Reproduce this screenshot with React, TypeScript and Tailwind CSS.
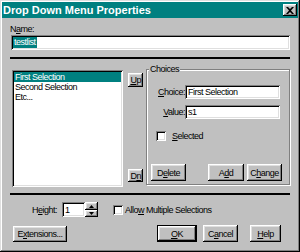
import type { ReactNode } from 'react';

const raised =
  'bg-[#c0c0c0] shadow-[inset_-1px_-1px_#000,inset_1px_1px_#fff,inset_-2px_-2px_#808080,inset_2px_2px_#dfdfdf]';
const sunken =
  'bg-white shadow-[inset_1px_1px_#808080,inset_-1px_-1px_#fff,inset_2px_2px_#000,inset_-2px_-2px_#dfdfdf]';

function Btn({ className = '', children }: { className?: string; children: ReactNode }) {
  return (
    <div className={`flex items-center justify-center ${raised} ${className}`}>
      <span>{children}</span>
    </div>
  );
}

function Check({ className = '' }: { className?: string }) {
  return <div className={`w-[10px] h-[10px] ${sunken} ${className}`} />;
}

function Arrow({ up }: { up?: boolean }) {
  return (
    <svg width="5" height="3" viewBox="0 0 5 3">
      <path d={up ? 'M2.5 0 L5 3 L0 3 Z' : 'M0 0 L5 0 L2.5 3 Z'} fill="#000" />
    </svg>
  );
}

export default function App() {
  return (
    <div
      className="w-[300px] h-[252px] bg-[#c0c0c0] p-[2px] flex flex-col text-black text-[9px] leading-[10px] tracking-[-0.5px] shadow-[inset_-1px_-1px_#000,inset_1px_1px_#dfdfdf,inset_-2px_-2px_#808080,inset_2px_2px_#fff]"
      style={{ fontFamily: '"Liberation Sans", Arial, sans-serif' }}
    >
      {/* Title bar */}
      <div className="h-[16px] bg-[#008080] flex items-center pl-[1px] pr-[1px]">
        <span className="flex-1 text-white font-bold text-[11px] leading-[16px] tracking-normal">
          Drop Down Menu Properties
        </span>
        <div className={`w-[14px] h-[12px] flex items-center justify-center ${raised}`}>
          <svg width="8" height="7" viewBox="0 0 8 7">
            <path d="M0 0h2l2 2 2-2h2L5 3.5 8 7H6L4 5 2 7H0l3-3.5z" fill="#000" />
          </svg>
        </div>
      </div>

      <div className="flex flex-col px-[8px]">
        {/* Name */}
        <div className="mt-[6px] h-[10px]">
          N<u>a</u>me:
        </div>
        <div className={`mt-[1px] ml-[1px] w-[279px] h-[15px] ${sunken} flex items-center pl-[2px]`}>
          <span className="bg-[#008080] text-white px-[1px] leading-[11px]">testlist</span>
        </div>

        <div className="mt-[7px] h-[2px] bg-black w-[280px]" />

        {/* Main row */}
        <div className="mt-[11px] flex h-[117px]">
          <div className={`ml-[2px] w-[112px] h-[117px] ${sunken} p-[2px]`}>
            <div className="bg-[#008080] text-white h-[10px] pl-[1px]">First Selection</div>
            <div className="h-[10px] pl-[1px]">Second Selection</div>
            <div className="h-[10px] pl-[1px]">Etc...</div>
          </div>

          <div className="ml-[5px] w-[15px] flex flex-col justify-between pt-[3px] pb-[5px]">
            <Btn className="h-[14px]">
              <u>U</u>p
            </Btn>
            <Btn className="h-[13px]">
              D<u>n</u>
            </Btn>
          </div>

          {/* Choices group */}
          <div className="relative ml-[3px] -mt-[1px] w-[145px] h-[116px] border border-[#808080] shadow-[inset_1px_1px_#fff,1px_1px_#fff] flex flex-col">
            <span className="absolute left-[2px] -top-[6px] bg-[#c0c0c0] px-[1px]">Choices</span>
            <div className="mt-[15px] flex items-center">
              <span className="w-[38px] text-right">
                <u>C</u>hoice:
              </span>
              <div className={`w-[95px] h-[14px] ${sunken} flex items-center pl-[3px]`}>First Selection</div>
            </div>
            <div className="mt-[6px] flex items-center">
              <span className="w-[38px] text-right">
                <u>V</u>alue:
              </span>
              <div className={`w-[95px] h-[14px] ${sunken} flex items-center pl-[3px]`}>s1</div>
            </div>
            <div className="mt-[12px] ml-[9px] flex items-center">
              <Check />
              <span className="ml-[6px]">
                <u>S</u>elected
              </span>
            </div>
            <div className="mt-auto mb-[3px] ml-[4px] flex h-[17px]">
              <Btn className="w-[35px]">
                D<u>e</u>lete
              </Btn>
              <Btn className="ml-[22px] w-[36px]">
                A<u>d</u>d
              </Btn>
              <Btn className="ml-[3px] w-[35px]">
                C<u>h</u>ange
              </Btn>
            </div>
          </div>
        </div>

        <div className="mt-[6px] h-[2px] bg-black w-[280px]" />

        {/* Height row */}
        <div className="mt-[7px] flex items-center h-[15px]">
          <span className="w-[47px] text-right">
            H<u>e</u>ight:
          </span>
          <div className={`ml-[5px] w-[23px] h-[15px] ${sunken} flex items-center pl-[3px]`}>1</div>
          <div className="w-[13px] h-[15px] flex flex-col">
            <div className={`h-[8px] flex items-center justify-center ${raised}`}>
              <Arrow up />
            </div>
            <div className={`h-[7px] flex items-center justify-center ${raised}`}>
              <Arrow />
            </div>
          </div>
          <Check className="ml-[15px]" />
          <span className="ml-[2px]">
            Allo<u>w</u> Multiple Selections
          </span>
        </div>

        {/* Bottom buttons */}
        <div className="mt-[8px] flex items-end h-[17px]">
          <Btn className="ml-[3px] w-[54px] h-[16px]">
            E<u>x</u>tensions...
          </Btn>
          <div className="ml-[90px] w-[40px] h-[17px] border border-black flex">
            <Btn className="flex-1">
              <u>O</u>K
            </Btn>
          </div>
          <Btn className="ml-[6px] w-[35px] h-[17px]">
            C<u>a</u>ncel
          </Btn>
          <Btn className="ml-[12px] w-[31px] h-[17px]">
            <u>H</u>elp
          </Btn>
        </div>
      </div>
    </div>
  );
}
